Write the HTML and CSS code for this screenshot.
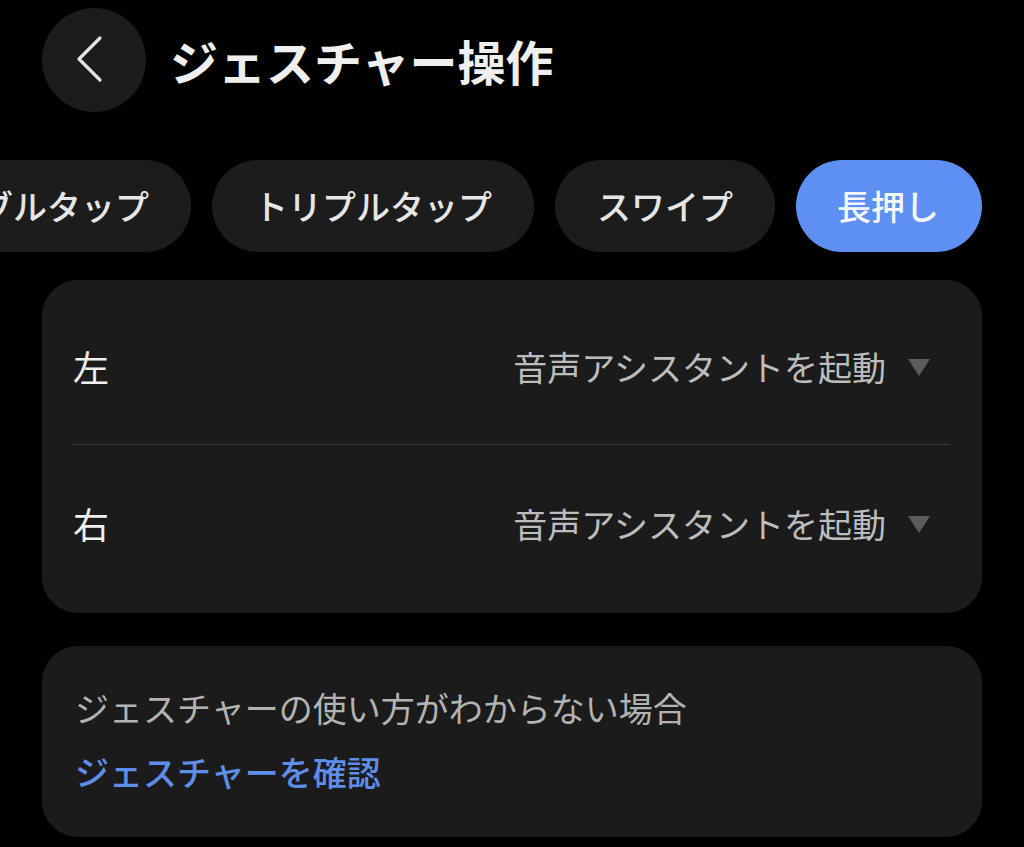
FILE: index.html
```html
<!DOCTYPE html>
<html lang="ja">
<head>
    <meta charset="UTF-8">
    <meta name="viewport" content="width=device-width, initial-scale=1.0">
    <title>ジェスチャー操作</title>
    <link rel="stylesheet" href="styles.css">
</head>
<body>
    <div class="page">
        <header class="top-bar">
            <button class="back-btn" aria-label="戻る">
                <svg width="104" height="104" viewBox="0 0 104 104">
                    <path d="M58 30 L37 51 L58 72" fill="none" stroke="#e4e4e4" stroke-width="3.2" stroke-linecap="round" stroke-linejoin="round"/>
                </svg>
            </button>
            <h1 class="title">ジェスチャー操作</h1>
        </header>

        <div class="tabs">
            <div class="tab">ダブルタップ</div>
            <div class="tab">トリプルタップ</div>
            <div class="tab">スワイプ</div>
            <div class="tab active">長押し</div>
        </div>

        <div class="card">
            <div class="row">
                <span class="row-label">左</span>
                <span class="row-value">音声アシスタントを起動</span>
                <span class="caret"></span>
            </div>
            <div class="divider"></div>
            <div class="row">
                <span class="row-label">右</span>
                <span class="row-value">音声アシスタントを起動</span>
                <span class="caret"></span>
            </div>
        </div>

        <div class="card help">
            <div class="help-text">ジェスチャーの使い方がわからない場合</div>
            <a class="help-link" href="#">ジェスチャーを確認</a>
        </div>
    </div>
</body>
</html>
```

FILE: styles.css
```css
body {
    margin: 0;
    padding: 0;
    background-color: #000;
    color: #efefef;
    font-family: "Noto Sans CJK JP", "Noto Sans", sans-serif;
    overflow: hidden;
}

.page {
    padding: 8px 42px 0 42px;
}

.top-bar {
    display: flex;
    align-items: center;
    height: 104px;
}

.back-btn {
    width: 104px;
    height: 104px;
    border: none;
    border-radius: 50%;
    padding: 0;
    background-color: #1c1c1c;
    display: flex;
    align-items: center;
    justify-content: center;
    flex-shrink: 0;
}

.title {
    margin: 0 0 0 24px;
    font-size: 48px;
    font-weight: 700;
    line-height: 1;
    color: #efefef;
}

.tabs {
    display: flex;
    justify-content: flex-end;
    gap: 21px;
    margin-top: 48px;
    white-space: nowrap;
}

.tab {
    flex-shrink: 0;
    height: 92px;
    line-height: 92px;
    padding: 0 42px;
    border-radius: 46px;
    background-color: #1c1c1c;
    color: #e6e6e6;
    font-size: 34px;
    font-weight: 500;
}

.tab.active {
    background-color: #5e8ff2;
    color: #f4f7ff;
    padding: 0 43px 0 41px;
}

.card {
    background-color: #1b1b1b;
    border-radius: 36px;
    margin-top: 28px;
    padding: 8px 0 12px 0;
}

.row {
    display: flex;
    align-items: center;
    height: 156px;
    padding: 0 32px 0 31px;
}

.row-label {
    font-size: 36px;
    color: #efefef;
    flex: 1;
}

.row-value {
    font-size: 34px;
    color: #bdbdbd;
}

.caret {
    width: 0;
    height: 0;
    border-left: 11px solid transparent;
    border-right: 11px solid transparent;
    border-top: 17px solid #5c5c5c;
    margin: 2px 20px 0 22px;
}

.divider {
    height: 1px;
    margin: 0 32px 0 31px;
    background-color: #3a3a3a;
}

.card.help {
    margin-top: 33px;
    padding: 37px 32px 40px 33px;
}

.help-text {
    font-size: 34px;
    line-height: 50px;
    color: #b3b3b3;
}

.help-link {
    display: block;
    margin-top: 14px;
    font-size: 34px;
    line-height: 50px;
    font-weight: 500;
    color: #5f8ee9;
    text-decoration: none;
}
```
